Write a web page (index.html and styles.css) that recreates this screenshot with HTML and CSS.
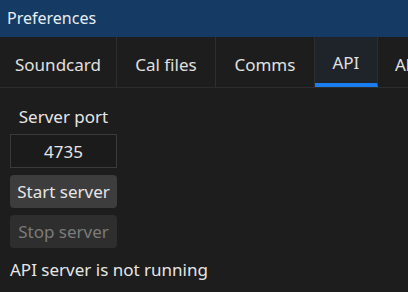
FILE: index.html
```html
<!DOCTYPE html>
<html lang="en">
  <head>
    <meta charset="UTF-8" />
    <meta name="viewport" content="width=device-width, initial-scale=1.0" />
    <title>Preferences</title>
    <link rel="stylesheet" href="styles.css">
  </head>
  <body>
    <header class="titlebar">Preferences</header>

    <nav class="tabs">
      <div class="tab">Soundcard</div>
      <div class="tab">Cal files</div>
      <div class="tab">Comms</div>
      <div class="tab active">API</div>
      <div class="tab last">About</div>
    </nav>

    <div class="panel">
      <div class="port-group">
        <label for="port">Server port</label>
        <input type="text" id="port" value="4735" />
        <button class="btn">Start server</button>
        <button class="btn" disabled>Stop server</button>
      </div>
      <p class="status">API server is not running</p>
    </div>
  </body>
</html>
```

FILE: styles.css
```css
body {
  font-family: "Noto Sans", sans-serif;
  font-size: 17px;
  margin: 0;
  padding: 0;
  background-color: #1d1d1d;
  color: #e6e6e6;
  overflow: hidden;
}
.titlebar {
  background-color: #153a63;
  color: #e8eef5;
  height: 37px;
  line-height: 36px;
  padding: 0 7px;
  font-size: 16px;
}
.tabs {
  display: flex;
  height: 50px;
  border-bottom: 1px solid #2c2c2c;
  white-space: nowrap;
}
.tab {
  flex-shrink: 0;
  min-width: 99px;
  box-sizing: border-box;
  padding: 6px 15px 0;
  line-height: 44px;
  text-align: center;
  border-right: 1px solid #2e2e2e;
  color: #e0e0e0;
}
.tab.active {
  min-width: 0;
  width: 63px;
  padding: 6px 0 0;
  background-color: #1f232a;
  border-bottom: 4px solid #1a7ef0;
  line-height: 40px;
}
.tab.last {
  min-width: 0;
  padding: 6px 17px 0;
}
.panel {
  padding: 18px 10px 0;
}
.port-group {
  display: flex;
  flex-direction: column;
  width: 107px;
}
.port-group label {
  text-align: center;
  line-height: 22px;
}
input,
.btn {
  font-family: inherit;
  font-size: 17px;
  box-sizing: border-box;
  width: 100%;
  margin: 7px 0 0;
}
input {
  height: 34px;
  margin-top: 6px;
  background-color: #1b1b1b;
  border: 1px solid #3a3a3a;
  color: #e6e6e6;
  text-align: center;
  padding: 0;
}
.btn {
  height: 33px;
  background-color: #3d3d3d;
  color: #e6e6e6;
  border: none;
  border-radius: 4px;
  padding: 0;
}
.btn:disabled {
  background-color: #2e2e2e;
  color: #7b7b7b;
}
.status {
  margin: 11px 0 0;
  line-height: 22px;
}
```
